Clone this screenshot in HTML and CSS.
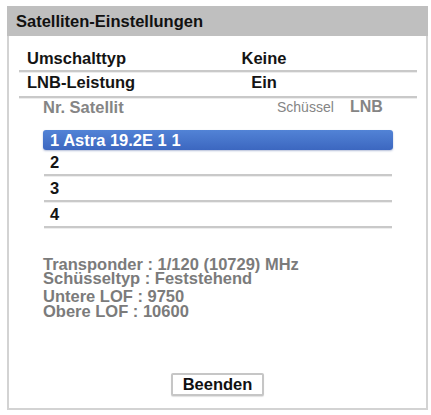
FILE: index.html
```html
<!DOCTYPE html>
<html lang="de">
<head>
<meta charset="utf-8">
<title>Satelliten-Einstellungen</title>
<link rel="stylesheet" href="styles.css">
</head>
<body>
<div class="frame">
  <div class="title">Satelliten-Einstellungen</div>
  <div class="settings">
    <div class="setting first">
      <span class="label">Umschalttyp</span>
      <span class="value">Keine</span>
    </div>
    <div class="setting second">
      <span class="label">LNB-Leistung</span>
      <span class="value">Ein</span>
    </div>
  </div>
  <div class="satlist">
    <div class="sathead">
      <span class="col-name">Nr. Satellit</span>
      <span class="col-dish">Schüssel</span>
      <span class="col-lnb">LNB</span>
    </div>
    <div class="satrow selected">1 Astra 19.2E 1 1</div>
    <div class="satrow">2</div>
    <div class="satrow">3</div>
    <div class="satrow">4</div>
  </div>
  <div class="info">
    <div class="group">
      <div>Transponder : 1/120 (10729) MHz</div>
      <div>Schüsseltyp : Feststehend</div>
    </div>
    <div class="group second">
      <div>Untere LOF : 9750</div>
      <div>Obere LOF : 10600</div>
    </div>
  </div>
  <div class="actions">
    <button class="btn" type="button">Beenden</button>
  </div>
</div>
</body>
</html>
```
FILE: styles.css
```css
html, body {
  margin: 0;
  padding: 0;
  background: #ffffff;
}
body {
  width: 431px;
  height: 415px;
  padding-top: 6px;
  box-sizing: border-box;
  font-family: "Liberation Sans", Arial, sans-serif;
  font-weight: bold;
  font-size: 16.5px;
  color: #141414;
}
.frame {
  box-sizing: border-box;
  margin-left: 7px;
  width: 421px;
  height: 404px;
  border: 2px solid #d3d3d3;
  border-top: none;
  display: flex;
  flex-direction: column;
}
.title {
  height: 30px;
  line-height: 30px;
  background: #bfbfbf;
  padding-left: 7px;
  margin: 0 -2px 0 -2px;
  padding-left: 9px;
  font-size: 16.5px;
  color: #111;
}
.settings {
  padding: 0 9px 0 10px;
}
.setting {
  display: grid;
  grid-template-columns: 180px 130px;
  line-height: 20px;
  border-bottom: 2px solid #c9c9c9;
  box-shadow: 0 1px 0 #ececec;
}
.setting.first {
  margin-top: 12px;
  padding-bottom: 2px;
}
.setting.second {
  padding-bottom: 4px;
}
.label {
  padding-left: 8px;
}
.value {
  text-align: center;
}
.satlist {
  margin: 0 33px 0 34px;
}
.sathead {
  display: grid;
  grid-template-columns: 234px 73px auto;
  line-height: 18px;
  margin-top: 0;
  height: 32px;
  color: #858585;
}
.col-dish {
  font-weight: normal;
  font-size: 14px;
}
.col-lnb {
  font-size: 16px;
}
.satrow {
  height: 24px;
  line-height: 24px;
  margin: 0 1px;
  padding-left: 6px;
  border-bottom: 2px solid #c9c9c9;
  box-shadow: 0 1px 0 #ededed;
}
.satrow.selected {
  height: 20px;
  line-height: 20px;
  margin: 0;
  padding-left: 7px;
  border-bottom: none;
  border-radius: 3px;
  color: #ffffff;
  background: linear-gradient(#5283d6, #3c67c0);
  box-shadow: 0 1px 2px rgba(40, 70, 140, 0.35);
}
.info {
  margin: 29px 0 0 34px;
  color: #7b7b7b;
}
.group {
  line-height: 14px;
}
.group.second {
  margin-top: 4px;
  line-height: 15px;
}
.actions {
  margin-top: auto;
  margin-bottom: 12px;
  display: flex;
  justify-content: center;
}
.btn {
  box-sizing: border-box;
  width: 93px;
  height: 23px;
  padding: 0;
  background: #ffffff;
  border: 2px solid #c6c6c6;
  border-radius: 2px;
  font-family: "Liberation Sans", Arial, sans-serif;
  font-weight: bold;
  font-size: 16.5px;
  color: #111;
  box-shadow: 0 1px 1px rgba(0, 0, 0, 0.12);
}
```
